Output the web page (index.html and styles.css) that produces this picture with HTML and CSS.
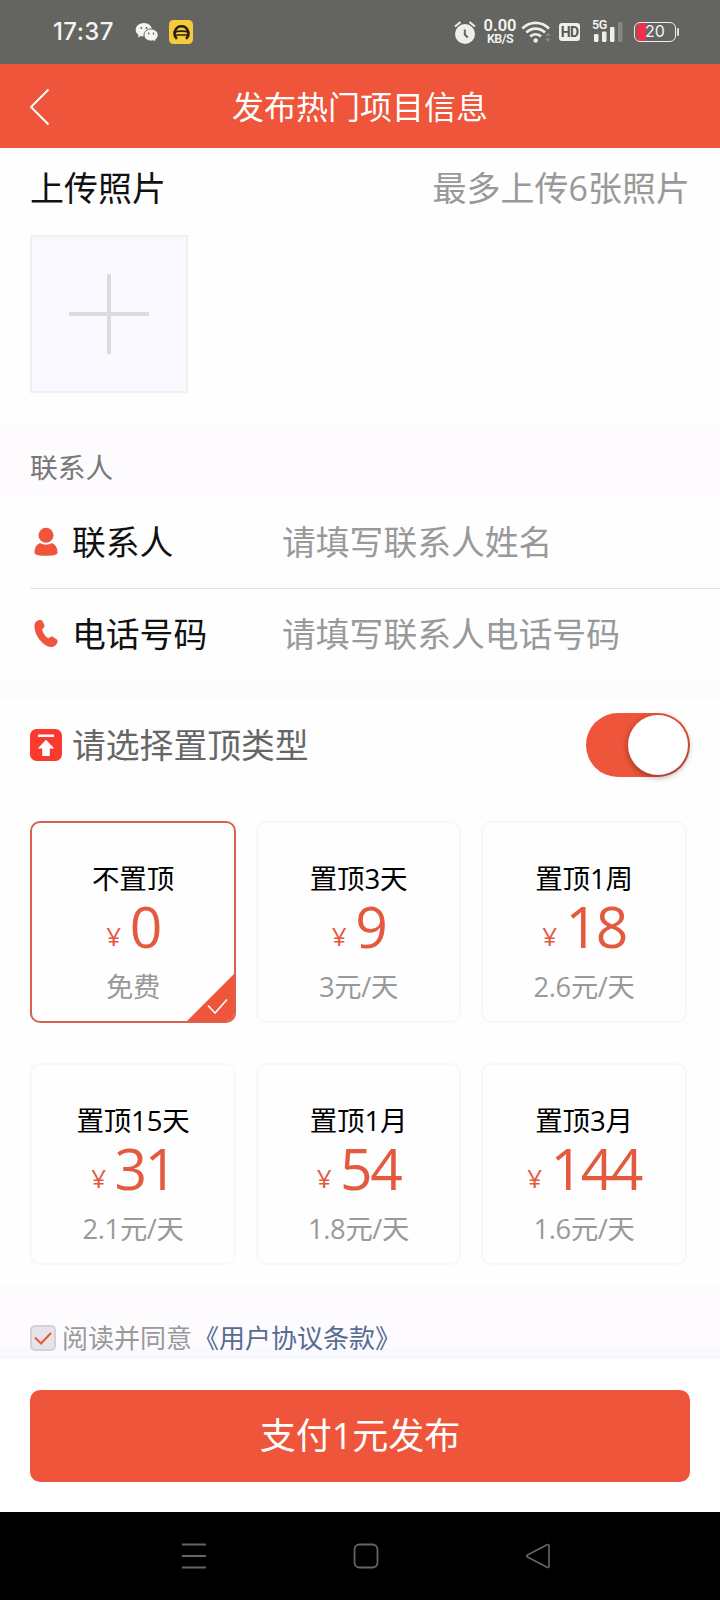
FILE: index.html
```html
<!DOCTYPE html>
<html lang="zh-CN">
<head>
<meta charset="utf-8">
<title>发布热门项目信息</title>
<link rel="stylesheet" href="styles.css">
</head>
<body>
<div class="statusbar">
  <span class="clock">17:37</span>
  <svg class="ic-wechat" width="24" height="22" viewBox="0 0 24 22">
    <path fill="#f4f4f4" d="M9 1C4.300 1 .7 4 .7 7.800c0 2.200 1.200 4 3 5.300l-.8 2.500 3-1.500c1 .3 2 .4 3.100.4C13.500 14.500 17 11.500 17 7.800S13.500 1 9 1z"/>
    <path fill="#f4f4f4" stroke="#646561" stroke-width="1" d="M16 7c-4 0-7 2.700-7 6s3 6.100 7 6.100c.9 0 1.700-.1 2.500-.3l2.400 1.300-.6-2.100c1.700-1.100 2.900-2.900 2.900-5 0-3.300-3.200-6-7.200-6z"/>
    <g fill="#646561"><circle cx="6.300" cy="6" r="1"/><circle cx="11.500" cy="6" r="1"/><circle cx="13.700" cy="11.500" r=".9"/><circle cx="18.500" cy="11.500" r=".9"/></g>
  </svg>
  <svg class="ic-app" width="24" height="24" viewBox="0 0 24 24">
    <rect width="24" height="24" rx="4.500" fill="#f8c93a"/>
    <path d="M8 18.700C5.500 16.500 5.200 13.500 6 11.200 7 8 9.500 6.200 12.500 6.200s5.500 1.800 6.500 5c.8 2.300.5 5.300-2 7.500" fill="none" stroke="#25200f" stroke-width="2.600"/>
    <path d="M4.500 12.500c5-1.800 11-1.800 16 0M7 15h11" fill="none" stroke="#25200f" stroke-width="1.700"/>
  </svg>
  <div class="status-right">
    <svg class="ic-alarm" width="22" height="23" viewBox="0 0 22 23">
      <circle cx="11" cy="13" r="10" fill="#eee"/>
      <path d="M1 5.500L6.500 1M21 5.500L15.500 1" stroke="#eee" stroke-width="2"/>
      <path d="M10.800 8.500v5l3 3" fill="none" stroke="#646561" stroke-width="2"/>
    </svg>
    <div class="speed"><span class="speed-n">0.00</span><span class="speed-u">KB/S</span></div>
    <svg class="ic-wifi" width="30" height="24" viewBox="0 0 30 24">
      <g fill="none" stroke="#eee" stroke-width="2.700"><path d="M1.300 8.500c7.500-7.500 19.200-7.500 26.700 0"/><path d="M5.300 12.500c5.300-5.300 13.400-5.300 18.700 0"/><path d="M9.300 16.500c3-3 7.700-3 10.700 0"/></g>
      <circle cx="14.700" cy="20.500" r="2.300" fill="#eee"/>
      <path d="M24 16l3-3.500 3 3.500zM24 18.500l3 3.500 3-3.500z" fill="#858682"/>
    </svg>
    <span class="hd">HD</span>
    <div class="signal"><span class="g5">5G</span>
      <svg width="32" height="22" viewBox="0 0 32 22"><g fill="#eee"><rect x="2" y="13" width="4.500" height="8" rx="1"/><rect x="10" y="10.500" width="4.500" height="10.500" rx="1"/><rect x="18" y="6" width="4.500" height="15" rx="1"/></g><rect x="26" y="1" width="4.500" height="20" rx="1" fill="#858682"/></svg>
    </div>
    <div class="battery"><span>20</span></div>
    <i class="battery-tip"></i>
  </div>
</div>

<div class="header">
  <svg class="back" width="22" height="40" viewBox="0 0 22 40"><path d="M19.500 2.500L2 20l17.500 17.500" fill="none" stroke="#fff" stroke-width="2"/></svg>
  <h1>发布热门项目信息</h1>
</div>

<section class="photos">
  <div class="photos-head"><span>上传照片</span><span class="hint">最多上传6张照片</span></div>
  <div class="add"></div>
</section>

<div class="band caption">联系人</div>

<section class="fields">
  <div class="field">
    <svg width="24" height="30" viewBox="0 0 24 30"><circle cx="12" cy="8.300" r="7.500" fill="#ee553a"/><path d="M6 16c4 2.200 8 2.200 12 0 3.500 1.500 5.500 4.800 5.500 9.500 0 1.800-2 3.300-11.500 3.300S.5 27.300.5 25.500C.5 20.800 2.500 17.500 6 16z" fill="#ee553a"/></svg>
    <span class="label">联系人</span><span class="ph">请填写联系人姓名</span>
  </div>
  <div class="field phone">
    <svg width="24" height="30" viewBox="0 0 24 30"><path d="M2 2.800C4 .8 7.300.3 8.300 1.800l2 4.200c.6 1.600-.3 2.700-2.300 4.200.8 4 3 7.200 6.500 9.300 2-1.900 3.400-2.400 4.700-1.500l3.600 2.600c1.500 1.200.8 3.700-1.300 5.600-2.300 2.200-5.500 2.300-8.500.7C6.500 23.300 1.800 17 .6 9.500.2 6.500.5 4.300 2 2.800z" fill="#ee553a"/></svg>
    <span class="label">电话号码</span><span class="ph">请填写联系人电话号码</span>
  </div>
</section>

<div class="band thin"></div>

<section class="top-type">
  <div class="type-head">
    <svg width="32" height="32" viewBox="0 0 32 32"><rect width="32" height="32" rx="6.500" fill="#f93a2f"/><path d="M8 5.500h16v2.600H8zM16 10.800l8.200 8.700h-4.400v7.500h-7.600v-7.500H7.800z" fill="#fff"/></svg>
    <span>请选择置顶类型</span>
    <div class="switch"><i></i></div>
  </div>
  <div class="cards">
    <div class="card on"><div class="name">不置顶</div><div class="price"><small>¥</small>0</div><div class="per">免费</div>
      <svg class="tick" width="49" height="49" viewBox="0 0 49 49"><path d="M49 0v49H0z" fill="#ee553a"/><path d="M22 32.500l7 7.500L41 26.500" fill="none" stroke="#fff" stroke-width="1.600"/></svg></div>
    <div class="card"><div class="name">置顶3天</div><div class="price"><small>¥</small>9</div><div class="per">3元/天</div></div>
    <div class="card"><div class="name">置顶1周</div><div class="price"><small>¥</small>18</div><div class="per">2.6元/天</div></div>
    <div class="card"><div class="name">置顶15天</div><div class="price"><small>¥</small>31</div><div class="per">2.1元/天</div></div>
    <div class="card"><div class="name">置顶1月</div><div class="price"><small>¥</small>54</div><div class="per">1.8元/天</div></div>
    <div class="card"><div class="name">置顶3月</div><div class="price"><small>¥</small>144</div><div class="per">1.6元/天</div></div>
  </div>
</section>

<div class="band agree">
  <svg width="26" height="26" viewBox="0 0 26 26"><rect x="1" y="1" width="24" height="24" rx="4" fill="#e6e4e7" stroke="#d3d1d5" stroke-width="2"/><path d="M5 12.500l6 6L21 8" fill="none" stroke="#ee553a" stroke-width="2"/></svg>
  <span>阅读并同意</span><a>《用户协议条款》</a>
</div>

<div class="footer"><div class="pay">支付1元发布</div></div>

<div class="navbar">
  <svg width="26" height="26" viewBox="0 0 26 26"><path d="M1 1.500h24M1 13h24M1 24.500h24" stroke="#666" stroke-width="1.800"/></svg>
  <svg width="26" height="26" viewBox="0 0 26 26"><rect x="1.500" y="1.500" width="23" height="23" rx="5" fill="none" stroke="#666" stroke-width="1.800"/></svg>
  <svg width="26" height="26" viewBox="0 0 26 26"><path d="M22 1.800L2.500 12c-1 .6-1 1.400 0 2L22 24.200c1.300.6 2 0 2-1.200V3c0-1.200-.7-1.800-2-1.200z" fill="none" stroke="#666" stroke-width="1.600"/></svg>
</div>
</body>
</html>
```
FILE: styles.css
```css
* { box-sizing: border-box; }
body {
  margin: 0;
  width: 720px;
  height: 1600px;
  overflow: hidden;
  display: flex;
  flex-direction: column;
  background: #fefefe;
  color: #111;
  font-family: "Open Sans", "Noto Sans CJK SC", sans-serif;
  font-weight: 370;
}
body > * { flex: none; }
svg { display: block; flex: none; }

.statusbar {
  height: 64px;
  background: #646561;
  display: flex;
  align-items: center;
  padding-left: 53px;
  color: #f4f4f4;
}
.clock { width: 82px; font: 500 24px/64px Inter, sans-serif; letter-spacing: .4px; }
.ic-wechat { margin-top: 2px; }
.ic-app { margin-left: 10px; }
.status-right { margin-left: auto; padding-right: 41px; display: flex; align-items: center; height: 64px; }
.speed {
  width: 36px;
  margin-left: 6px;
  text-align: center;
  font-family: Roboto, sans-serif;
  font-weight: 600;
  white-space: nowrap;
}
.speed-n { display: block; font-size: 16.500px; line-height: 13px; }
.speed-u { display: block; font-size: 12.500px; line-height: 13px; letter-spacing: -.5px; }
.ic-wifi { margin-left: 3px; }
.hd {
  width: 21px;
  height: 18px;
  margin-left: 8px;
  border-radius: 3px;
  background: #eee;
  color: #555652;
  font: 700 14px/18px Roboto, sans-serif;
  letter-spacing: -.8px;
  text-align: center;
}
.signal { position: relative; margin-left: 12px; width: 32px; }
.g5 { position: absolute; left: 0; top: -2px; font: 600 12.500px/12px Roboto, sans-serif; letter-spacing: -.5px; }
.battery {
  width: 42px;
  height: 20px;
  margin-left: 10px;
  border: 1.500px solid #eee;
  border-radius: 6px;
  background: linear-gradient(90deg, #ef304c 9px, transparent 9px) 2px 0 no-repeat;
  font: 400 16px/17px Inter, sans-serif;
  text-align: center;
}
.battery-tip { width: 2px; height: 8px; margin-left: 1px; background: #ddd; border-radius: 1px; }

.header {
  height: 84px;
  background: #ee553a;
  display: flex;
  align-items: center;
  padding: 2px 28px 0 29px;
}
.header h1 {
  flex: 1;
  margin: 0 23px 0 0;
  color: #fff;
  font-size: 32px;
  font-weight: 370;
  line-height: 82px;
  text-align: center;
}

.photos { height: 276px; padding: 13px 30px 0; }
.photos-head { display: flex; justify-content: space-between; font-size: 34px; line-height: 54px; }
.hint { color: #999; }
.add {
  width: 158px;
  height: 158px;
  margin-top: 20px;
  border: 2px solid #f0f0f3;
  background:
    linear-gradient(#dcdadf, #dcdadf) center / 80px 4px no-repeat,
    linear-gradient(#dcdadf, #dcdadf) center / 4px 80px no-repeat,
    #f8f8fe;
}

.band { background: #fdfbfe; }
.caption { height: 72px; padding: 7px 30px 0; color: #777; font-size: 27.700px; line-height: 72px; }
.thin { height: 20px; }

.fields { height: 183px; padding-left: 30px; }
.field {
  height: 92px;
  padding-left: 4px;
  display: flex;
  align-items: center;
  font-size: 33.800px;
  line-height: 90px;
}
.field.phone { height: 91px; border-top: 1px solid #e3e3e3; }
.label { width: 210px; margin-left: 14px; }
.ph { color: #999; }
.phone .label { width: 210px; margin-left: 14px; }

.top-type { height: 585px; padding: 0 30px; }
.type-head {
  height: 92px;
  display: flex;
  align-items: center;
  color: #666;
  font-size: 33.800px;
}
.type-head span { margin-left: 10px; padding-bottom: 3px; }
.switch {
  width: 104px;
  height: 64px;
  margin-left: auto;
  padding: 2px;
  border-radius: 32px;
  background: #ee553a;
  display: flex;
  justify-content: flex-end;
}
.switch i { width: 60px; height: 60px; border-radius: 50%; background: #fff; box-shadow: 0 2px 6px rgba(0, 0, 0, .4); }

.cards {
  margin-top: 30px;
  display: grid;
  grid-template-columns: 206px 205px 206px;
  column-gap: 20px;
  row-gap: 40px;
}
.card {
  position: relative;
  height: 202px;
  padding-top: 36px;
  border: 2px solid #f8f8fb;
  border-radius: 10px;
  text-align: center;
  overflow: hidden;
}
.card.on { border-color: #d9604c; }
.name { color: #000; font-size: 27.500px; line-height: 40px; letter-spacing: -.2px; }
.price { height: 64px; color: #e45a3f; font-size: 57px; line-height: 55px; letter-spacing: -2.500px; }
.price small { margin-right: 11px; font-size: 26px; position: relative; top: -2px; }
.per { color: #999; font-size: 27.300px; line-height: 47px; letter-spacing: -.3px; }
.tick { position: absolute; right: -1px; bottom: -1px; }

.agree {
  height: 75px;
  padding: 32px 30px 0;
  display: flex;
  align-items: flex-start;
  background: linear-gradient(#fdfbfe 60px, #f6f7fd);
  color: #999;
  font-size: 26px;
  line-height: 44px;
}
.agree svg { margin-top: 9px; }
.agree span { margin-left: 6px; }
.agree a { margin-left: 1px; color: #566b91; }

.footer { height: 153px; padding: 31px 30px 0; background: #fff; }
.pay {
  height: 92px;
  border-radius: 10px;
  background: #ee553a;
  color: #fff;
  font-size: 36px;
  line-height: 92px;
  text-align: center;
}

.navbar { height: 88px; background: #000; display: flex; align-items: center; gap: 146px; padding-left: 181px; }
```
